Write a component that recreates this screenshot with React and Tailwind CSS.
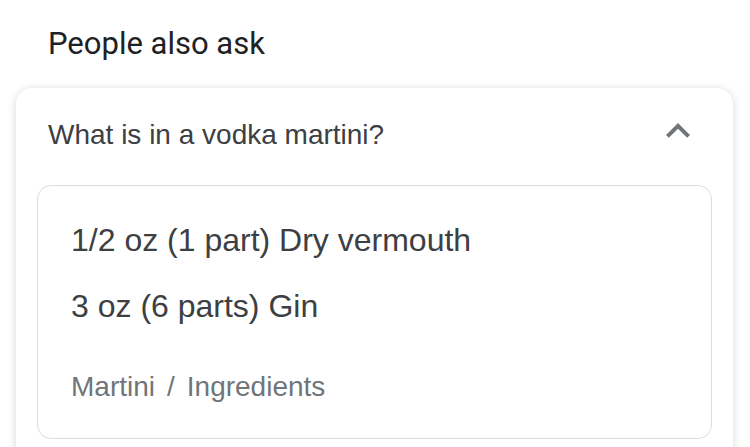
export default function App() {
  return (
    <div className="min-h-screen bg-white pt-[26px] font-['Liberation_Sans',Arial,sans-serif]">
      {/* Heading */}
      <h2 className="pl-[48px] font-['Roboto',sans-serif] text-[31px] leading-[36px] text-[#202124]">
        People also ask
      </h2>

      {/* Question card */}
      <div className="mt-[26px] ml-[16px] w-[717px] rounded-[16px] bg-white pb-[24px] pt-[29px] shadow-[0_1px_8px_rgba(32,33,36,0.18)]">
        <div className="flex items-center justify-between pl-[32px] pr-[31px]">
          <span className="text-[28px] leading-[36px] text-[#3c4043]">What is in a vodka martini?</span>
          <svg width="48" height="48" viewBox="0 0 24 24" className="-mt-[12px] -mb-[4px] fill-[#70757a]">
            <path d="M12 8l-6 6 1.41 1.41L12 10.83l4.59 4.58L18 14z" />
          </svg>
        </div>

        <div className="mx-[21px] mt-[32px] rounded-[14px] border border-[#dadce0] pl-[33px] pt-[34px] pb-[33px]">
          <p className="text-[32px] leading-[40px] text-[#3c4043]">1/2 oz (1 part) Dry vermouth</p>
          <p className="mt-[26px] text-[32px] leading-[40px] text-[#3c4043]">3 oz (6 parts) Gin</p>
          <p className="mt-[43px] text-[28px] leading-[36px] text-[#70757a]">
            Martini<span className="mx-[12px]">/</span>Ingredients
          </p>
        </div>
      </div>
    </div>
  );
}
